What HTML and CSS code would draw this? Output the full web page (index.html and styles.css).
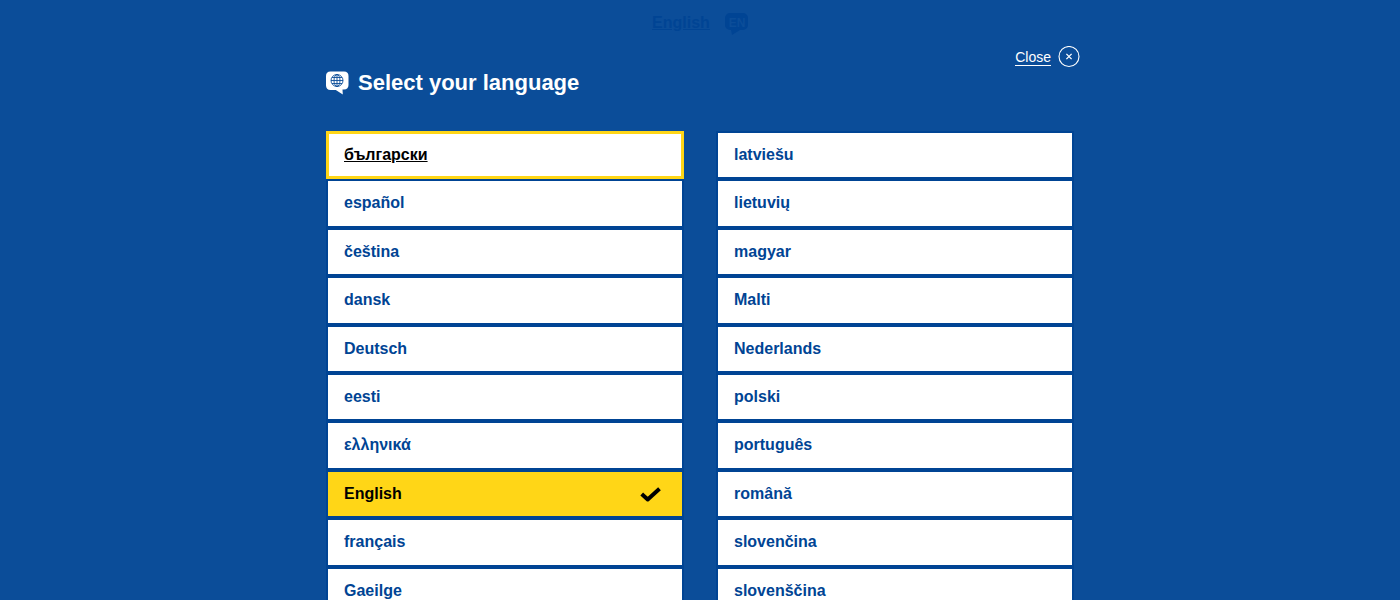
FILE: index.html
```html
<!DOCTYPE html>
<html lang="en">
<head>
<meta charset="utf-8">
<meta name="viewport" content="width=device-width, initial-scale=1">
<title>Select your language</title>
<link rel="stylesheet" href="styles.css">
</head>
<body>
<div class="splash">
  <header class="current">
    <a class="current-link" href="#languages">English</a>
    <svg class="current-icon" viewBox="0 0 23 24" aria-hidden="true"><path fill="currentColor" d="M5 2h13a5 5 0 0 1 5 5v7a5 5 0 0 1-5 5h-3l-8 5-1-5H5a5 5 0 0 1-5-5V7a5 5 0 0 1 5-5z"/><text class="current-code" x="12" y="16" text-anchor="middle">EN</text></svg>
  </header>
  <main class="dialog">
    <div class="close-row">
      <button class="close" type="button">
        <span class="close-label">Close</span>
        <svg class="close-icon" viewBox="0 0 22 22" aria-hidden="true"><circle cx="11" cy="10.500" r="10" fill="none" stroke="currentColor" stroke-width="1.1"/><path d="M8.400 7.900l5.200 5.200M13.600 7.900l-5.200 5.200" fill="none" stroke="currentColor" stroke-width="1.3"/></svg>
      </button>
    </div>
    <h1 class="title">
      <svg class="title-icon" viewBox="0 0 24 24" aria-hidden="true"><path fill="#fff" d="M4.500.5h13.500c3 0 4.500 1.500 4.500 4.500v9c0 2.700-1.500 4.500-4.500 4.500h-1.500l.3 5-7-4.500H4.500C1.500 19 0 17 0 14.500V5C0 2 1.500.5 4.500.5z"/><g fill="none" stroke="#0b4d99" stroke-width=".9"><circle cx="11" cy="9.500" r="6"/><ellipse cx="11" cy="9.500" rx="3" ry="6"/><path d="M11 3.500v12M5 9.500h12M6 6.500h10M6 12.500h10"/></g></svg>
      Select your language
    </h1>
    <nav class="columns" id="languages" aria-label="Languages">
      <ul class="list">
        <li><a class="item item-focus" href="#bg" lang="bg">български</a></li>
        <li><a class="item" href="#es" lang="es">español</a></li>
        <li><a class="item" href="#cs" lang="cs">čeština</a></li>
        <li><a class="item" href="#da" lang="da">dansk</a></li>
        <li><a class="item" href="#de" lang="de">Deutsch</a></li>
        <li><a class="item" href="#et" lang="et">eesti</a></li>
        <li><a class="item" href="#el" lang="el">ελληνικά</a></li>
        <li><a class="item item-active" href="#en" lang="en" aria-current="true">English<svg class="tick" viewBox="0 0 22 16" aria-hidden="true"><path d="M1.700 8l6 5.500L19.500 2.700" fill="none" stroke="#000" stroke-width="4" stroke-linejoin="round"/></svg></a></li>
        <li><a class="item" href="#fr" lang="fr">français</a></li>
        <li><a class="item" href="#ga" lang="ga">Gaeilge</a></li>
      </ul>
      <ul class="list">
        <li><a class="item" href="#lv" lang="lv">latviešu</a></li>
        <li><a class="item" href="#lt" lang="lt">lietuvių</a></li>
        <li><a class="item" href="#hu" lang="hu">magyar</a></li>
        <li><a class="item" href="#mt" lang="mt">Malti</a></li>
        <li><a class="item" href="#nl" lang="nl">Nederlands</a></li>
        <li><a class="item" href="#pl" lang="pl">polski</a></li>
        <li><a class="item" href="#pt" lang="pt">português</a></li>
        <li><a class="item" href="#ro" lang="ro">română</a></li>
        <li><a class="item" href="#sk" lang="sk">slovenčina</a></li>
        <li><a class="item" href="#sl" lang="sl">slovenščina</a></li>
      </ul>
    </nav>
  </main>
</div>
</body>
</html>
```
FILE: styles.css
```css
* {
  box-sizing: border-box;
}

body {
  margin: 0;
  background: #0b4d99;
  color: #fff;
  font-family: "Liberation Sans", Arial, sans-serif;
  font-size: 16px;
  line-height: 1.4;
}

.splash {
  height: 100vh;
  overflow: hidden;
}

.current {
  display: flex;
  justify-content: center;
  align-items: center;
  gap: 15px;
  height: 46px;
  color: #004494;
  font-weight: 700;
}

.current-link {
  color: inherit;
}

.current-icon {
  width: 23px;
  height: 24px;
}

.current-code {
  fill: #0b4d99;
  font-size: 12px;
  font-weight: 700;
}

.dialog {
  max-width: 780px;
  margin: 0 auto;
  padding: 0 16px;
}

.close-row {
  display: flex;
  justify-content: flex-end;
  margin-right: -6px;
}

.close {
  display: flex;
  align-items: center;
  gap: 7px;
  padding: 0;
  border: 0;
  background: none;
  color: inherit;
  font: inherit;
  font-size: 14px;
  line-height: 16px;
  cursor: pointer;
}

.close-label {
  border-bottom: 1px solid currentColor;
}

.close-icon {
  width: 22px;
  height: 22px;
}

.title {
  display: flex;
  align-items: center;
  gap: 8px;
  margin: 0 0 33px;
  font-size: 22px;
  line-height: 30px;
}

.title-icon {
  width: 24px;
  height: 24px;
}

.columns {
  display: grid;
  grid-template-columns: 1fr 1fr;
  gap: 32px;
}

.list {
  margin: 0;
  padding: 0;
  list-style: none;
}

.item {
  display: flex;
  align-items: center;
  justify-content: space-between;
  padding: 11px 20px 11px 16px;
  border: 2px solid #004494;
  background: #fff;
  color: #004494;
  font-weight: 700;
  text-decoration: none;
}

.item-focus {
  outline: 3px solid #ffd617;
  outline-offset: -3px;
  color: #000;
  text-decoration: underline;
}

.item-active {
  background: #ffd617;
  color: #000;
}

.tick {
  width: 22px;
  height: 16px;
}
```
